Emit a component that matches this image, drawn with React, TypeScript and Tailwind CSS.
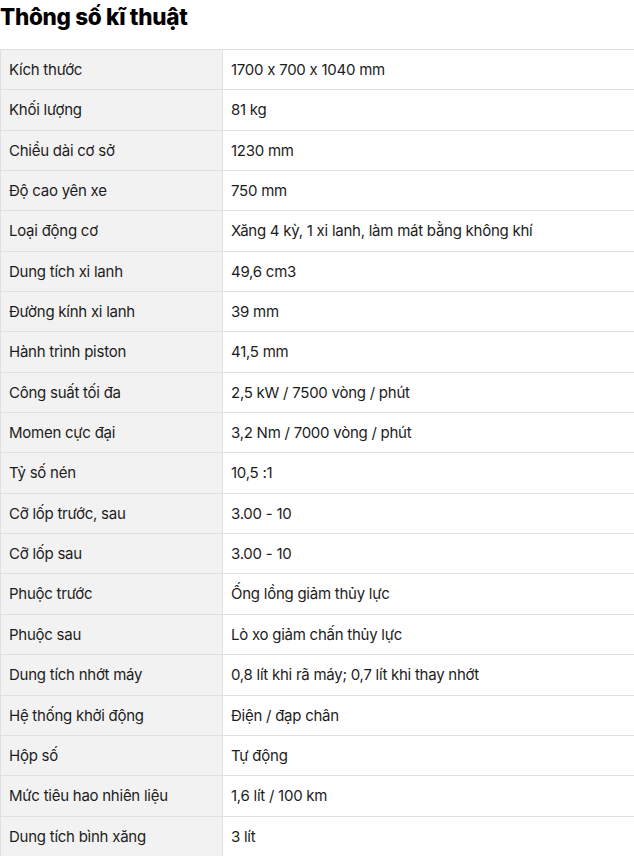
const specs: [string, string][] = [
  ["Kích thước", "1700 x 700 x 1040 mm"],
  ["Khối lượng", "81 kg"],
  ["Chiều dài cơ sở", "1230 mm"],
  ["Độ cao yên xe", "750 mm"],
  ["Loại động cơ", "Xăng 4 kỳ, 1 xi lanh, làm mát bằng không khí"],
  ["Dung tích xi lanh", "49,6 cm3"],
  ["Đường kính xi lanh", "39 mm"],
  ["Hành trình piston", "41,5 mm"],
  ["Công suất tối đa", "2,5 kW / 7500 vòng / phút"],
  ["Momen cực đại", "3,2 Nm / 7000 vòng / phút"],
  ["Tỷ số nén", "10,5 :1"],
  ["Cỡ lốp trước, sau", "3.00 - 10"],
  ["Cỡ lốp sau", "3.00 - 10"],
  ["Phuộc trước", "Ống lồng giảm thủy lực"],
  ["Phuộc sau", "Lò xo giảm chấn thủy lực"],
  ["Dung tích nhớt máy", "0,8 lít khi rã máy; 0,7 lít khi thay nhớt"],
  ["Hệ thống khởi động", "Điện / đạp chân"],
  ["Hộp số", "Tự động"],
  ["Mức tiêu hao nhiên liệu", "1,6 lít / 100 km"],
  ["Dung tích bình xăng", "3 lít"],
];

export default function App() {
  return (
    <div className="w-[634px] h-[856px] overflow-hidden bg-white text-[#1c1c1c] font-['Inter',sans-serif] [font-feature-settings:'calt'_0]">
      <h2 className="text-[22.5px] font-extrabold leading-[34px] pb-[15px] tracking-[-0.3px] text-black">
        Thông số kĩ thuật
      </h2>
      <table className="w-[660px] border-collapse text-[15px] tracking-[-0.25px]">
        <tbody>
          {specs.map(([k, v]) => (
            <tr key={k}>
              <td className="w-[222px] bg-[#f2f2f2] border border-[#dfdfe5] px-[8px] py-[9px] leading-[21.35px]">
                {k}
              </td>
              <td className="border border-[#dfdfe5] px-[8px] py-[9px] leading-[21.35px]">{v}</td>
            </tr>
          ))}
        </tbody>
      </table>
    </div>
  );
}
